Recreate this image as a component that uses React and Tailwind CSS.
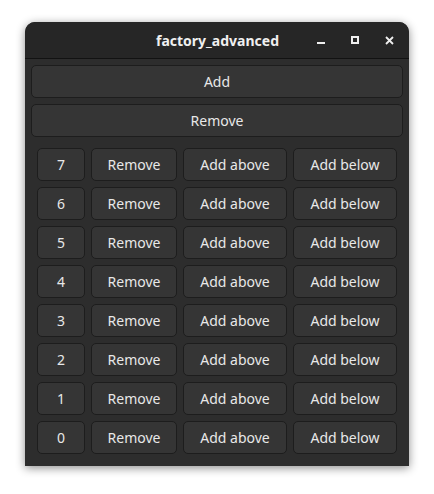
import React from 'react';

const rows = [7, 6, 5, 4, 3, 2, 1, 0];

const Btn = ({ children, className = '' }) => (
    <button className={`h-[33px] rounded-[5px] border border-[#1d1d1d] bg-[#353535] text-[14px] text-[#e8e8e8] flex items-center justify-center ${className}`}>
        {children}
    </button>
);

export default function App() {
    return (
        <div className="w-[434px] h-[494px] bg-white pt-[22px] pl-[25px]" style={{ fontFamily: '"Noto Sans", "Open Sans", sans-serif' }}>
            <div className="w-[384px] h-[444px] rounded-t-[10px] bg-[#2d2d2d] shadow-[0_2px_10px_rgba(0,0,0,0.45)] flex flex-col overflow-hidden">
                <div className="h-[37px] shrink-0 bg-[#262626] border-b border-[#121212] relative flex items-center justify-center">
                    <span className="text-[14px] font-bold text-[#f0f0f0] pl-[1px]">factory_advanced</span>
                    <div className="absolute right-[15px] top-0 h-full flex items-center gap-[26px]">
                        <svg width="8" height="8" viewBox="0 0 8 8"><rect x="0" y="6" width="8" height="2" fill="#eee" /></svg>
                        <svg width="8" height="8" viewBox="0 0 8 8"><rect x="1" y="1" width="6" height="6" fill="none" stroke="#eee" strokeWidth="2" /></svg>
                        <svg width="9" height="9" viewBox="0 0 9 9"><path d="M1 1 L8 8 M8 1 L1 8" stroke="#eee" strokeWidth="1.8" /></svg>
                    </div>
                </div>
                <div className="flex flex-col px-[6px] pt-[6px] gap-[6px]">
                    <Btn className="w-full">Add</Btn>
                    <Btn className="w-full">Remove</Btn>
                </div>
                <div className="flex flex-col gap-[6px] px-[12px] pt-[11px]">
                    {rows.map((n) => (
                        <div key={n} className="flex gap-[6px]">
                            <Btn className="w-[48px]">{n}</Btn>
                            <Btn className="w-[86px]">Remove</Btn>
                            <Btn className="w-[104px]">Add above</Btn>
                            <Btn className="w-[104px]">Add below</Btn>
                        </div>
                    ))}
                </div>
            </div>
        </div>
    );
}
